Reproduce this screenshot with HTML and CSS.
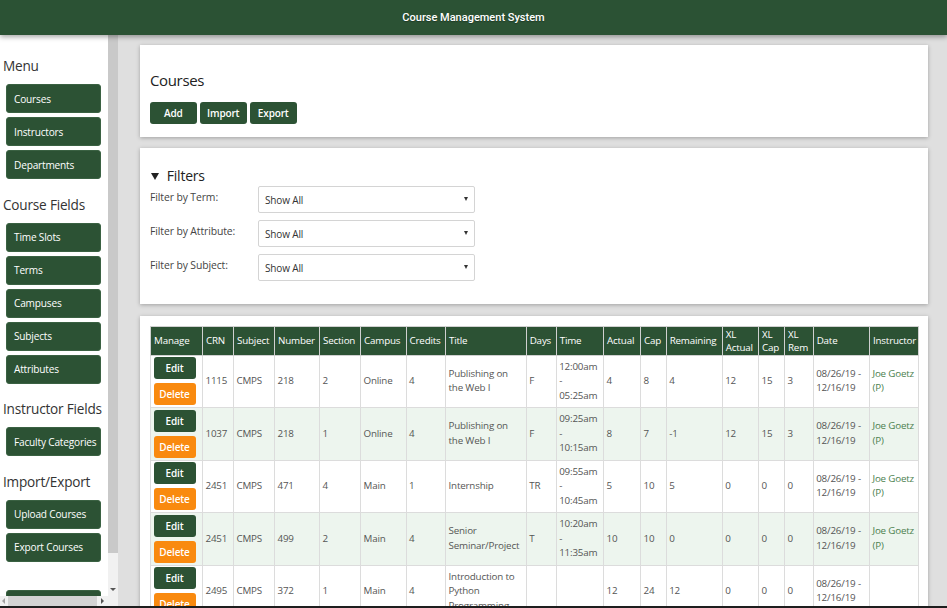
FILE: index.html
```html
<!DOCTYPE html>
<html lang="en">
<head>
<meta charset="utf-8">
<title>Course Management System</title>
<link rel="stylesheet" href="styles.css">
</head>
<body>
<header class="topbar">Course Management System</header>
<div class="layout">
  <aside class="sidebar">
    <nav class="side-content">
      <h3 class="side-heading">Menu</h3>
      <a class="side-btn">Courses</a>
      <a class="side-btn">Instructors</a>
      <a class="side-btn">Departments</a>
      <h3 class="side-heading">Course Fields</h3>
      <a class="side-btn">Time Slots</a>
      <a class="side-btn">Terms</a>
      <a class="side-btn">Campuses</a>
      <a class="side-btn">Subjects</a>
      <a class="side-btn">Attributes</a>
      <h3 class="side-heading">Instructor Fields</h3>
      <a class="side-btn">Faculty Categories</a>
      <h3 class="side-heading">Import/Export</h3>
      <a class="side-btn">Upload Courses</a>
      <a class="side-btn">Export Courses</a>
      <a class="side-btn side-btn-last">Logout</a>
    </nav>
    <div class="vbar"><div class="vthumb"></div><div class="vtrack"><span class="arrow-down"></span></div></div>
    <div class="hbar"><span class="arrow-left"></span><div class="hthumb"></div><span class="arrow-right"></span></div>
    <div class="corner"></div>
  </aside>
  <main class="main">
    <section class="card card-head">
      <h1 class="page-title">Courses</h1>
      <div class="action-row">
        <a class="action-btn">Add</a>
        <a class="action-btn">Import</a>
        <a class="action-btn">Export</a>
      </div>
    </section>
    <section class="card card-filters">
      <h2 class="filters-title"><svg class="tri" width="8" height="7" viewBox="0 0 8 7"><polygon points="0,0 8,0 4,7" fill="#222"/></svg>Filters</h2>
      <div class="filter-grid">
        <label class="filter-label">Filter by Term:</label>
        <div class="select"><span>Show All</span><span class="caret"></span></div>
        <label class="filter-label">Filter by Attribute:</label>
        <div class="select"><span>Show All</span><span class="caret"></span></div>
        <label class="filter-label">Filter by Subject:</label>
        <div class="select"><span>Show All</span><span class="caret"></span></div>
      </div>
    </section>
    <section class="card card-table">
      <table class="courses">
        <colgroup>
          <col class="w-manage"><col class="w-crn"><col class="w-subject"><col class="w-number"><col class="w-section"><col class="w-campus"><col class="w-credits"><col class="w-title"><col class="w-days"><col class="w-time"><col class="w-actual"><col class="w-cap"><col class="w-remaining"><col class="w-xlactual"><col class="w-xlcap"><col class="w-xlrem"><col class="w-date"><col class="w-instructor">
        </colgroup>
        <thead>
          <tr><th>Manage</th><th>CRN</th><th>Subject</th><th>Number</th><th>Section</th><th>Campus</th><th>Credits</th><th>Title</th><th>Days</th><th>Time</th><th>Actual</th><th>Cap</th><th>Remaining</th><th>XL Actual</th><th>XL Cap</th><th>XL Rem</th><th>Date</th><th>Instructor</th></tr>
        </thead>
        <tbody>
          <tr>
            <td><a class="btn btn-edit">Edit</a><a class="btn btn-del">Delete</a></td>
            <td>1115</td><td>CMPS</td><td>218</td><td>2</td><td>Online</td><td>4</td><td>Publishing on the Web I</td><td>F</td><td>12:00am - 05:25am</td><td>4</td><td>8</td><td>4</td><td>12</td><td>15</td><td>3</td><td>08/26/19 - 12/16/19</td><td><a class="inst">Joe&nbsp;Goetz (P)</a></td>
          </tr>
          <tr class="alt">
            <td><a class="btn btn-edit">Edit</a><a class="btn btn-del">Delete</a></td>
            <td>1037</td><td>CMPS</td><td>218</td><td>1</td><td>Online</td><td>4</td><td>Publishing on the Web I</td><td>F</td><td>09:25am - 10:15am</td><td>8</td><td>7</td><td>-1</td><td>12</td><td>15</td><td>3</td><td>08/26/19 - 12/16/19</td><td><a class="inst">Joe&nbsp;Goetz (P)</a></td>
          </tr>
          <tr>
            <td><a class="btn btn-edit">Edit</a><a class="btn btn-del">Delete</a></td>
            <td>2451</td><td>CMPS</td><td>471</td><td>4</td><td>Main</td><td>1</td><td>Internship</td><td>TR</td><td>09:55am - 10:45am</td><td>5</td><td>10</td><td>5</td><td>0</td><td>0</td><td>0</td><td>08/26/19 - 12/16/19</td><td><a class="inst">Joe&nbsp;Goetz (P)</a></td>
          </tr>
          <tr class="alt">
            <td><a class="btn btn-edit">Edit</a><a class="btn btn-del">Delete</a></td>
            <td>2451</td><td>CMPS</td><td>499</td><td>2</td><td>Main</td><td>4</td><td>Senior Seminar/Project</td><td>T</td><td>10:20am - 11:35am</td><td>10</td><td>10</td><td>0</td><td>0</td><td>0</td><td>0</td><td>08/26/19 - 12/16/19</td><td><a class="inst">Joe&nbsp;Goetz (P)</a></td>
          </tr>
          <tr>
            <td><a class="btn btn-edit">Edit</a><a class="btn btn-del">Delete</a></td>
            <td>2495</td><td>CMPS</td><td>372</td><td>1</td><td>Main</td><td>4</td><td>Introduction to Python Programming</td><td></td><td></td><td>12</td><td>24</td><td>12</td><td>0</td><td>0</td><td>0</td><td>08/26/19 - 12/16/19</td><td></td>
          </tr>
        </tbody>
      </table>
    </section>
  </main>
</div>
<div class="bottom-line"></div>
</body>
</html>
```
FILE: styles.css
```css
* { box-sizing: border-box; }
html, body { margin: 0; height: 608px; overflow: hidden; }
body {
  display: flex;
  flex-direction: column;
  font-family: "Open Sans", "Noto Sans", sans-serif;
  color: #333;
  background: #dfdfdf;
}
a { text-decoration: none; }

.topbar {
  flex: none;
  height: 35px;
  background: #2b5234;
  color: #fff;
  display: flex;
  align-items: center;
  justify-content: center;
  font-family: Roboto, "Liberation Sans", sans-serif;
  font-size: 11px;
  font-weight: 500;
  position: relative;
  z-index: 2;
  box-shadow: 0 2px 5px rgba(0, 0, 0, 0.35);
  text-shadow: 0 1px 1px rgba(0, 0, 0, 0.3);
}

.layout { flex: 1; min-height: 0; display: flex; }
.bottom-line { flex: none; height: 2px; background: #1e1e1e; }

/* Sidebar */
.sidebar {
  flex: none;
  width: 118px;
  display: grid;
  grid-template-columns: 108px 10px;
  grid-template-rows: 1fr 10px;
  background: #fff;
}
.side-content { overflow: hidden; padding-top: 5.8px; }
.side-heading {
  margin: 16.5px 0 9px 3px;
  font-size: 13.6px;
  line-height: 18px;
  letter-spacing: -0.2px;
  font-weight: 400;
  color: #333;
  white-space: nowrap;
}
.side-btn {
  display: flex;
  align-items: center;
  width: 95px;
  height: 29px;
  margin: 0 0 4px 6px;
  padding-left: 7px;
  background: #2c5234;
  border: 1px solid #3a6142;
  border-radius: 3px;
  color: #fff;
  font-size: 10.1px;
  letter-spacing: -0.18px;
  white-space: nowrap;
}
.side-btn-last { margin-top: 28.7px; }

.vbar { display: flex; flex-direction: column; background: #f1f1f1; }
.vthumb { height: 518px; background: #c9c9c9; }
.vtrack {
  flex: 1;
  display: flex;
  align-items: flex-end;
  justify-content: center;
  padding-bottom: 5px;
}
.arrow-down {
  width: 0; height: 0;
  border-left: 3px solid transparent;
  border-right: 3px solid transparent;
  border-top: 3px solid #555;
}
.hbar { display: flex; align-items: center; background: #f1f1f1; }
.arrow-left {
  width: 0; height: 0;
  margin-left: 2px;
  border-top: 3px solid transparent;
  border-bottom: 3px solid transparent;
  border-right: 3px solid #a3a3a3;
}
.hthumb { align-self: stretch; width: 89px; margin-left: 3px; background: #d3d3d3; }
.arrow-right {
  width: 0; height: 0;
  margin-left: 4px;
  border-top: 3px solid transparent;
  border-bottom: 3px solid transparent;
  border-left: 3px solid #555;
}
.corner { background: #f1f1f1; }

/* Main */
.main {
  flex: 1;
  min-width: 0;
  overflow: hidden;
  padding: 10px 19px 0 22px;
  background: #dfdfdf;
}
.card {
  background: #fff;
  box-shadow: 0 1px 4px rgba(0, 0, 0, 0.28);
  margin-bottom: 11.5px;
}
.card-head { padding: 24.6px 10px 12.4px; }
.page-title {
  margin: 0 0 12.7px;
  font-size: 15px;
  line-height: 20px;
  letter-spacing: -0.35px;
  font-weight: 400;
  color: #222;
}
.action-row { display: flex; gap: 3.5px; }
.action-btn {
  display: flex;
  align-items: center;
  justify-content: center;
  width: 46.5px;
  height: 22px;
  background: #2c5234;
  border-radius: 3px;
  color: #fff;
  font-size: 10px;
  letter-spacing: -0.15px;
  font-weight: 600;
}

.card-filters { padding: 18.5px 10px 23.6px; }
.filters-title {
  margin: 0 0 1.2px;
  display: flex;
  align-items: center;
  font-size: 14px;
  line-height: 18px;
  letter-spacing: -0.2px;
  font-weight: 400;
  color: #222;
}
.tri { margin: 1px 7.7px 0 1px; }
.filter-grid {
  display: grid;
  grid-template-columns: 108px 217px;
  grid-auto-rows: 26.7px;
  row-gap: 7.3px;
}
.filter-label {
  padding-top: 4.5px;
  font-size: 10.4px;
  line-height: 14px;
  letter-spacing: -0.1px;
  color: #444;
}
.select {
  display: flex;
  align-items: center;
  justify-content: space-between;
  padding: 2px 6px 0 6px;
  border: 1px solid #d4d4d4;
  border-radius: 2px;
  font-size: 10px;
  letter-spacing: -0.15px;
  color: #333;
}
.caret {
  width: 0; height: 0;
  border-left: 2px solid transparent;
  border-right: 2px solid transparent;
  border-top: 4px solid #333;
  margin-top: -2px;
}

.card-table { padding: 10px; }
.courses {
  width: 767.7px;
  border-collapse: collapse;
  table-layout: fixed;
  font-size: 9.8px;
  letter-spacing: -0.18px;
  line-height: 14.5px;
  color: #555;
}
.w-manage { width: 52px; }
.w-crn { width: 31px; }
.w-subject { width: 41px; }
.w-number { width: 45px; }
.w-section { width: 41px; }
.w-campus { width: 45.5px; }
.w-credits { width: 39.5px; }
.w-title { width: 80.7px; }
.w-days { width: 30px; }
.w-time { width: 47.3px; }
.w-actual { width: 37px; }
.w-cap { width: 25.7px; }
.w-remaining { width: 56px; }
.w-xlactual { width: 36.3px; }
.w-xlcap { width: 26px; }
.w-xlrem { width: 28.7px; }
.w-date { width: 56.3px; }
.w-instructor { width: 48.7px; }

.courses th {
  background: #2c5234;
  color: #fff;
  font-weight: 400;
  text-align: left;
  padding: 1px 1px 1px 3px;
  line-height: 13px;
  height: 29px;
  border: 1px solid #d0d0d0;
  vertical-align: middle;
}
.courses td {
  padding: 1.5px 3px 1.5px 2.5px;
  height: 52.5px;
  border: 1px solid #dcdcdc;
  vertical-align: middle;
}
.courses tr.alt td { background: #edf5ee; }

.btn {
  display: flex;
  align-items: center;
  justify-content: center;
  width: 42px;
  height: 22px;
  border-radius: 3px;
  color: #fff;
  font-size: 10px;
  letter-spacing: -0.15px;
  font-weight: 600;
}
.btn-edit { background: #2c5234; margin-bottom: 4px; }
.btn-del { background: #f98a0f; }
.inst { color: #4c7f4f; }
```
